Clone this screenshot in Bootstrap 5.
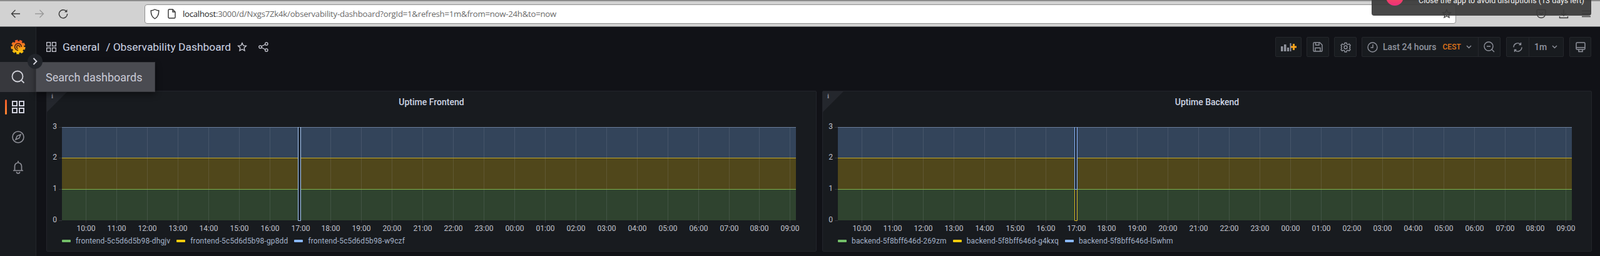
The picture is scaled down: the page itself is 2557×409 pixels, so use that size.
<!DOCTYPE html>
<html lang="en">
<head>
  <meta charset="UTF-8">
  <meta name="viewport" content="width=device-width, initial-scale=1.0">
  <title>Observability Dashboard - Grafana</title>
  <link rel="stylesheet" href="https://cdn.jsdelivr.net/npm/bootstrap@5.3.0/dist/css/bootstrap.min.css">
  <style>
    html, body { height: 100%; overflow: hidden; }
    body { background: #111217; font-family: Roboto, "Liberation Sans", sans-serif; color: #ccccdc; }
    svg { display: block; flex: none; }

    /* browser chrome */
    .ff-bar { height: 43px; background: #d2d2d2; border-top: 2px solid #8c8c8c; border-bottom: 1px solid #77787b; padding-left: 17px; padding-right: 14px; }
    .ff-nav { gap: 22px; width: 214px; }
    .ff-url { width: 2097px; height: 31px; background: #fff; border: 1px solid #8f8f8f; border-radius: 4px; font: 13.2px "Open Sans", sans-serif; color: #6a6a6a; padding-left: 8px; letter-spacing: -.24px; }
    .ff-url b { font-weight: 400; color: #1c1c1c; }
    .ff-shield { margin-right: 13px; }
    .ff-page { margin-right: 11px; }
    .ff-tools { gap: 20px; margin-left: 128px; }
    .ff-star { margin-left: auto; margin-right: 6px; }
    .ff-toast { left: 2192px; top: -10px; width: 351px; height: 33px; background: rgba(58,58,58,.93); border-radius: 0 0 4px 4px; color: #f2f2f2; font: 12.5px/16px Roboto, sans-serif; padding: 1px 0 0 75px; white-space: nowrap; }
    .ff-dot { left: 23px; top: -11px; width: 28px; height: 28px; border-radius: 50%; background: linear-gradient(#f9683a, #ec2f7c); }

    /* grafana shell */
    .gf-shell { height: 366px; }
    .gf-side { width: 58px; background: #181b1f; border-right: 1px solid #24262b; padding-top: 14px; }
    .gf-side-item { height: 48px; }
    .gf-logo { height: 36px; margin-bottom: 6px; }
    .gf-active { background: #37383d; }
    .gf-mark { left: 8px; top: 12px; width: 3px; height: 24px; border-radius: 2px; background: linear-gradient(#f05a28, #ff8833); }
    .gf-tip { left: 57px; top: 56px; width: 191px; height: 48px; background: #4a4b51; border: 1px solid #3b3c41; font-size: 18px; color: #c9cad6; padding-left: 15px; box-shadow: 0 4px 10px rgba(0,0,0,.45); z-index: 5; }
    .gf-fold { left: 44px; top: 43px; width: 24px; height: 24px; border-radius: 50%; background: #22252b; z-index: 6; }
    .gf-main { padding: 16px 13px 0 16px; }
    .gf-head { height: 32px; margin-bottom: 54px; }
    .gf-crumb { font-size: 17.4px; color: #ccd3e3; gap: 10px; }
    .gf-btn { height: 32px; background: #181b1f; border: 1px solid #25272c; border-radius: 2px; color: #8f939e; font-size: 14px; font-weight: 500; }
    .gf-tools { gap: 8px; margin-right: 1px; }
    .gf-add { width: 42px; }
    .gf-square { width: 36px; }
    .gf-range { width: 222px; }
    .gf-refresh { width: 92px; margin-left: 1px; }
    .gf-tv { width: 35px; margin-left: 1px; }
    .gf-part { width: 35px; }
    .gf-sep { border-left: 1px solid #25272c; }
    .gf-tz { font-size: 12px; color: #e0751a; margin-left: 10px; margin-right: 8px; }

    /* panels */
    .gf-panels { gap: 9px; height: 257px; }
    .gf-panel { flex: 1 1 0; background: #181b1f; border: 1px solid #23252b; border-radius: 2px; }
    .gf-corner { left: 0; top: 0; width: 0; height: 0; border-top: 33px solid #24272d; border-right: 33px solid transparent; }
    .gf-info { left: 7px; top: 1px; font: bold 11px "Liberation Serif", serif; color: #8f929c; }
    .gf-title { height: 33px; font-size: 14px; font-weight: 500; color: #ccd3e3; padding-top: 1px; }
    .gf-legend { padding-left: 24px; gap: 10px; font-size: 12px; letter-spacing: .14px; color: #a3b1c7; height: 18px; margin-top: 4px; white-space: nowrap; }
    .gf-key { width: 14px; height: 4px; border-radius: 1px; margin-right: 8px; }
    .gf-chart text { font: 12px Roboto, sans-serif; fill: #c0c1cb; }
  </style>
</head>
<body>

<!-- Firefox toolbar -->
<div class="ff-bar d-flex align-items-center position-relative">
  <div class="ff-nav d-flex align-items-center">
    <svg width="16" height="16" viewBox="0 0 16 16" fill="none" stroke="#3c3c3c" stroke-width="1.4"><path d="M15 8H1.5M7.5 2L1.500 8l6 6"/></svg>
    <svg width="16" height="16" viewBox="0 0 16 16" fill="none" stroke="#9a9a9a" stroke-width="1.4"><path d="M1 8h13.500M8.500 2l6 6-6 6"/></svg>
    <svg width="16" height="16" viewBox="0 0 16 16" fill="none" stroke="#3c3c3c" stroke-width="1.5"><path d="M13.200 4.200A6.600 6.600 0 1 0 14.600 8"/><path d="M14.400 1v4.400H10" fill="#3c3c3c" stroke="none"/></svg>
  </div>
  <div class="ff-url d-flex align-items-center">
    <svg class="ff-shield" width="15" height="17" viewBox="0 0 15 17" fill="none" stroke="#333" stroke-width="1.4"><path d="M7.500 1c2 1.200 4 1.800 6.300 2 0 6-1.600 10.500-6.300 13C2.800 13.500 1.200 9 1.200 3 3.500 2.800 5.500 2.200 7.500 1z"/></svg>
    <svg class="ff-page" width="13" height="16" viewBox="0 0 13 16" fill="none" stroke="#333" stroke-width="1.4"><path d="M1 2.500A1.500 1.500 0 0 1 2.500 1H8l4 4v8.500a1.500 1.500 0 0 1-1.500 1.500h-8A1.500 1.500 0 0 1 1 13.500z"/><path d="M8 1v4h4"/></svg>
    <span><b>localhost</b>:3000/d/Nxgs7Zk4k/observability-dashboard?orgId=1&amp;refresh=1m&amp;from=now-24h&amp;to=now</span>
    <svg class="ff-star" width="16" height="16" viewBox="0 0 24 24" fill="none" stroke="#3c3c3c" stroke-width="2"><path d="M12 2.500l2.900 6.200 6.800.8-5 4.600 1.300 6.700-6-3.300-6 3.300 1.300-6.700-5-4.600 6.800-.8z"/></svg>
  </div>
  <div class="ff-tools d-flex align-items-center">
    <svg width="16" height="16" viewBox="0 0 16 16" fill="none" stroke="#3c3c3c" stroke-width="1.4"><path d="M2.500 1.500h11A1.500 1.500 0 0 1 15 3v4.500a7 7 0 0 1-14 0V3a1.500 1.500 0 0 1 1.500-1.500z"/><path d="M5 6l3 3 3-3"/></svg>
    <svg width="16" height="16" viewBox="0 0 16 16" fill="none" stroke="#3c3c3c" stroke-width="1.4"><path d="M8 1v9.500M4 7l4 4 4-4M1.500 12v2.500h13V12"/></svg>
    <svg width="16" height="16" viewBox="0 0 16 16" fill="none" stroke="#3c3c3c" stroke-width="1.4"><path d="M1 3.500h14M1 8h14M1 12.500h14"/></svg>
  </div>
  <div class="ff-toast position-absolute d-flex align-items-start">
    <span class="ff-dot position-absolute"></span>
    <span>Close the app to avoid disruptions (13 days left)</span>
  </div>
</div>

<div class="gf-shell d-flex">
  <!-- Sidebar -->
  <div class="gf-side flex-shrink-0 position-relative">
    <div class="gf-logo d-flex align-items-center justify-content-center">
      <svg width="24" height="24" viewBox="0 0 24 24">
        <defs><linearGradient id="logoFill" x1="0" y1="0" x2="0" y2="1"><stop offset="0" stop-color="#f05a28"/><stop offset="1" stop-color="#fbca0a"/></linearGradient></defs>
        <circle cx="12" cy="12" r="9.500" fill="url(#logoFill)"/>
        <circle cx="12" cy="12" r="10.300" fill="none" stroke="url(#logoFill)" stroke-width="2.600" stroke-dasharray="4.400 2.800"/>
        <path d="M17.400 12A5.400 5.400 0 1 0 12 17.400" fill="none" stroke="#3a1d12" stroke-width="1.500"/>
        <path d="M14.500 12.500A2.500 2.500 0 1 0 11.500 14.500" fill="none" stroke="#3a1d12" stroke-width="1.300"/>
      </svg>
    </div>
    <div class="gf-side-item gf-active d-flex align-items-center justify-content-center">
      <svg width="22" height="22" viewBox="0 0 22 22" fill="none" stroke="#cfd0d8" stroke-width="1.800"><circle cx="10" cy="10" r="8.500"/><path d="M16.300 16.300L20.500 20.500"/></svg>
    </div>
    <div class="gf-side-item d-flex align-items-center justify-content-center position-relative">
      <span class="gf-mark position-absolute"></span>
      <svg width="20" height="20" viewBox="0 0 20 20" fill="none" stroke="#cfd0dc" stroke-width="2"><rect x="1" y="1" width="7" height="7"/><rect x="12" y="1" width="7" height="7"/><rect x="1" y="12" width="7" height="7"/><rect x="12" y="12" width="7" height="7"/></svg>
    </div>
    <div class="gf-side-item d-flex align-items-center justify-content-center">
      <svg width="20" height="20" viewBox="0 0 20 20" fill="none" stroke="#8e8f97" stroke-width="1.600"><circle cx="10" cy="10" r="9"/><path d="M14 6l-2.300 5.700L6 14l2.300-5.700z"/></svg>
    </div>
    <div class="gf-side-item d-flex align-items-center justify-content-center">
      <svg width="18" height="22" viewBox="0 0 18 22" fill="none" stroke="#8e8f97" stroke-width="1.700"><path d="M9 1v2.500M3.500 16V9.500a5.500 5.500 0 0 1 11 0V16M1 16.500h16M6.500 18.500a2.500 2.500 0 0 0 5 0"/></svg>
    </div>
    <div class="gf-fold position-absolute d-flex align-items-center justify-content-center">
      <svg width="8" height="12" viewBox="0 0 8 12" fill="none" stroke="#d8d9e2" stroke-width="1.800"><path d="M1.500 1l5 5-5 5"/></svg>
    </div>
    <div class="gf-tip position-absolute d-flex align-items-center">Search dashboards</div>
  </div>

  <div class="gf-main flex-grow-1 d-flex flex-column">
    <!-- Dashboard header -->
    <div class="gf-head d-flex align-items-center justify-content-between">
      <div class="gf-crumb d-flex align-items-center">
        <svg width="16" height="16" viewBox="0 0 16 16" fill="none" stroke="#cbccd6" stroke-width="1.300"><rect x=".7" y=".7" width="5.800" height="5.800"/><rect x="9.500" y=".7" width="5.800" height="5.800"/><rect x=".7" y="9.500" width="5.800" height="5.800"/><rect x="9.500" y="9.500" width="5.800" height="5.800"/></svg>
        <span>General</span>
        <span>/ Observability Dashboard</span>
        <svg class="me-2" width="16" height="16" viewBox="0 0 24 24" fill="none" stroke="#cbccd6" stroke-width="2"><path d="M12 2.500l2.900 6.200 6.800.8-5 4.600 1.300 6.700-6-3.300-6 3.300 1.300-6.700-5-4.600 6.800-.8z"/></svg>
        <svg width="16" height="16" viewBox="0 0 16 16" fill="none" stroke="#cbccd6" stroke-width="1.300"><circle cx="3" cy="8" r="2.200"/><circle cx="12.800" cy="3" r="2.200"/><circle cx="12.800" cy="13" r="2.200"/><path d="M5 7l5.800-3M5 9l5.800 3"/></svg>
      </div>
      <div class="gf-tools d-flex align-items-center">
        <div class="gf-btn gf-add d-flex align-items-center justify-content-center">
          <svg width="25" height="16" viewBox="0 0 25 16"><path fill="#8f929c" d="M0 7h3.500v8H0zM5 4h3.500v11H5zM10 9h3v6h-3zM14.500 2h2v13h-2z"/><path fill="#f9a21c" d="M19 3h3v3.500h3v3h-3V13h-3V9.500h-3v-3h3z"/></svg>
        </div>
        <div class="gf-btn gf-square d-flex align-items-center justify-content-center">
          <svg width="16" height="16" viewBox="0 0 16 16" fill="none" stroke="#8f929c" stroke-width="1.400"><path d="M1 2.200A1.200 1.200 0 0 1 2.200 1h9L15 4.800v9A1.200 1.200 0 0 1 13.800 15H2.200A1.200 1.200 0 0 1 1 13.800z"/><path d="M4.500 1v4h5.500V1M4 15V9.500h8V15"/></svg>
        </div>
        <div class="gf-btn gf-square d-flex align-items-center justify-content-center">
          <svg width="17" height="17" viewBox="0 0 24 24" fill="none" stroke="#8f929c" stroke-width="2"><circle cx="12" cy="12" r="3.500"/><path d="M10 2h4l.7 3 2.500 1.100 2.700-1.600 2.800 2.900-1.600 2.600L22 12.500l-1.100 2.200 1.600 2.700-2.800 2.800-2.700-1.600-2.300 1-.7 2.900h-4l-.7-2.900-2.300-1-2.700 1.600-2.800-2.800 1.600-2.700L2 12.500l1.100-2.500-1.600-2.600 2.800-2.900L7 6.100 9.300 5z"/></svg>
        </div>
        <div class="gf-btn gf-range d-flex align-items-center">
          <div class="d-flex align-items-center h-100 ps-2 flex-grow-1">
            <svg class="me-2" width="17" height="17" viewBox="0 0 17 17" fill="none" stroke="#8f929c" stroke-width="1.400"><circle cx="8.500" cy="8.500" r="7.500"/><path d="M9 4v5H5.500"/></svg>
            <span>Last 24 hours</span><span class="gf-tz">CEST</span>
            <svg width="9" height="6" viewBox="0 0 9 6" fill="none" stroke="#8f929c" stroke-width="1.400"><path d="M1 1l3.500 3.500L8 1"/></svg>
          </div>
          <div class="gf-sep gf-part d-flex align-items-center justify-content-center h-100">
            <svg width="18" height="18" viewBox="0 0 18 18" fill="none" stroke="#8f929c" stroke-width="1.400"><circle cx="8" cy="8" r="7"/><path d="M5 8h6M13 13l4 4"/></svg>
          </div>
        </div>
        <div class="gf-btn gf-refresh d-flex align-items-center">
          <div class="gf-part d-flex align-items-center justify-content-center h-100">
            <svg width="17" height="17" viewBox="0 0 17 17" fill="none" stroke="#8f929c" stroke-width="1.400"><path d="M2 8.500A6.500 6.500 0 0 1 13 3.800M15 8.500A6.500 6.500 0 0 1 4 13.200M10.500 4.500h3V1M6.500 12.500h-3V16"/></svg>
          </div>
          <div class="gf-sep d-flex align-items-center h-100 flex-grow-1 ps-2">
            <span class="me-2">1m</span>
            <svg width="9" height="6" viewBox="0 0 9 6" fill="none" stroke="#8f929c" stroke-width="1.400"><path d="M1 1l3.500 3.500L8 1"/></svg>
          </div>
        </div>
        <div class="gf-btn gf-tv d-flex align-items-center justify-content-center">
          <svg width="16" height="17" viewBox="0 0 16 17" fill="none" stroke="#8f929c" stroke-width="1.500"><rect x="1" y="1" width="14" height="11" rx="1.500"/><path d="M1 9h14M5 12v3.500h6V12"/></svg>
        </div>
      </div>
    </div>

    <!-- Panels -->
    <div class="gf-panels d-flex">
      <div class="gf-panel position-relative">
        <span class="gf-corner position-absolute"></span><span class="gf-info position-absolute">i</span>
        <div class="gf-title d-flex align-items-center justify-content-center">Uptime Frontend</div>
        <svg class="gf-chart" id="chartFrontend" height="193"></svg>
        <div class="gf-legend d-flex align-items-center" id="legendFrontend"></div>
      </div>
      <div class="gf-panel position-relative">
        <span class="gf-corner position-absolute"></span><span class="gf-info position-absolute">i</span>
        <div class="gf-title d-flex align-items-center justify-content-center">Uptime Backend</div>
        <svg class="gf-chart" id="chartBackend" height="193"></svg>
        <div class="gf-legend d-flex align-items-center" id="legendBackend"></div>
      </div>
    </div>
  </div>
</div>

<script>
  const HOURS = ['10','11','12','13','14','15','16','17','18','19','20','21','22','23','00','01','02','03','04','05','06','07','08','09'];
  const PLOT = { x: 24, w: 1173, y3: 24, y2: 73, y1: 123, y0: 173 };

  // Draws one stacked uptime chart, dip is the gap around 17:00
  function drawChart(id, dipX, dipW, partialDip) {
    const svg = document.getElementById(id);
    svg.setAttribute('width', svg.parentElement.clientWidth);
    const right = PLOT.x + PLOT.w;
    const x0 = dipX + .5, x1 = dipX + dipW + .5;
    let out = '';
    out += `<rect x="${PLOT.x}" y="${PLOT.y3}" width="${PLOT.w}" height="49" fill="#33445a"/>`;
    out += `<rect x="${PLOT.x}" y="${PLOT.y2}" width="${PLOT.w}" height="50" fill="#50471b"/>`;
    out += `<rect x="${PLOT.x}" y="${PLOT.y1}" width="${PLOT.w}" height="50" fill="#2f432f"/>`;
    out += `<rect x="${x0}" y="${PLOT.y3}" width="${dipW}" height="${PLOT.y0 - PLOT.y3}" fill="#1b2431"/>`;

    // grid and time labels
    HOURS.forEach((h, i) => {
      const gx = Math.round(62 + i * 48.93) + .5;
      out += `<line x1="${gx}" x2="${gx}" y1="${PLOT.y3}" y2="${PLOT.y0 + 4}" stroke="#ccccdc" stroke-opacity=".13"/>`;
      out += `<text x="${gx}" y="190" text-anchor="middle">${h}:00</text>`;
    });
    [[3, PLOT.y3], [2, PLOT.y2], [1, PLOT.y1], [0, PLOT.y0]].forEach(([v, y]) => {
      out += `<line x1="${PLOT.x - 5}" x2="${PLOT.x}" y1="${y + .5}" y2="${y + .5}" stroke="#ccccdc" stroke-opacity=".15"/>`;
      out += `<text x="16" y="${y + 2.5}" text-anchor="end">${v}</text>`;
    });

    // series lines, interrupted at the dip
    out += `<path d="M${PLOT.x} ${PLOT.y3 + .5}H${right}" stroke="#6b7f9b" fill="none"/>`;
    out += `<path d="M${PLOT.x} ${PLOT.y2 + .5}H${x0}M${x1} ${PLOT.y2 + .5}H${right}" stroke="#c2a92a" fill="none"/>`;
    out += `<path d="M${PLOT.x} ${PLOT.y1 + .5}H${x0}M${x1} ${PLOT.y1 + .5}H${right}" stroke="#7fb04d" fill="none"/>`;
    if (partialDip) {
      out += `<path d="M${x0} ${PLOT.y3}V${PLOT.y1 + .5}H${x1}V${PLOT.y3}" stroke="#8ab8ff" fill="none"/>`;
      out += `<path d="M${x0} ${PLOT.y1 + 1}V${PLOT.y0 + .5}H${x1}V${PLOT.y1 + 1}" stroke="#d8bb22" fill="none"/>`;
    } else {
      out += `<path d="M${x0} ${PLOT.y3}V${PLOT.y0 + .5}H${x1}V${PLOT.y3}" stroke="#a9c9f5" fill="none"/>`;
    }
    svg.innerHTML = out;
  }

  function drawLegend(id, names) {
    const colors = ['#73bf69', '#f2cc0c', '#8ab8ff'];
    document.getElementById(id).innerHTML = names.map((n, i) =>
      `<div class="d-flex align-items-center"><span class="gf-key" style="background:${colors[i]}"></span>${n}</div>`).join('');
  }

  drawChart('chartFrontend', 401, 4, false);
  drawChart('chartBackend', 402, 4, true);
  drawLegend('legendFrontend', ['frontend-5c5d6d5b98-dhgjv', 'frontend-5c5d6d5b98-gp8dd', 'frontend-5c5d6d5b98-w9czf']);
  drawLegend('legendBackend', ['backend-5f8bff646d-269zm', 'backend-5f8bff646d-g4kxq', 'backend-5f8bff646d-l5whm']);
</script>
<script src="https://cdn.jsdelivr.net/npm/bootstrap@5.3.0/dist/js/bootstrap.bundle.min.js"></script>
</body>
</html>
